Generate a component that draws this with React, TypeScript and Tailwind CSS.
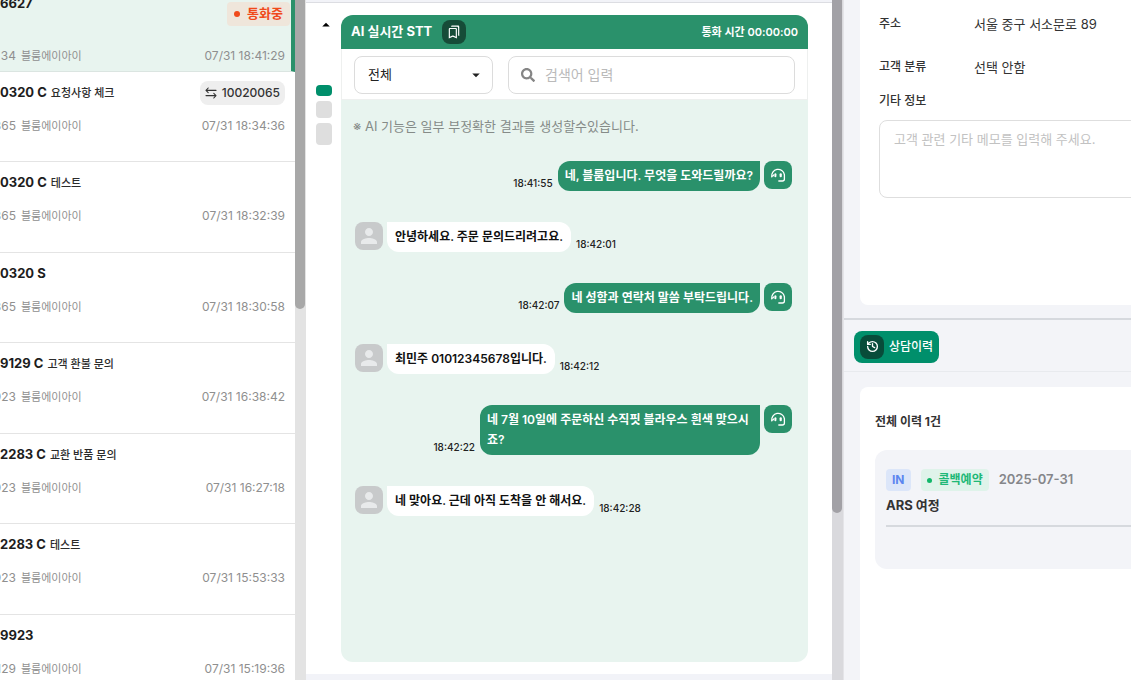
import { History } from "lucide-react";
import { FaSearch } from "react-icons/fa";
import { MdOutlineBookmarks, MdArrowDropDown, MdArrowDropUp, MdPerson } from "react-icons/md";

type Call = { title: string; subject?: string; ext: string; time: string; transfer?: string };
type Message = { from: "agent" | "customer"; text: string; time: string };

const calls: Call[] = [
  { title: "0320 C", subject: "요청사항 체크", ext: "365", time: "07/31 18:34:36", transfer: "10020065" },
  { title: "0320 C", subject: "테스트", ext: "365", time: "07/31 18:32:39" },
  { title: "0320 S", ext: "365", time: "07/31 18:30:58" },
  { title: "9129 C", subject: "고객 환불 문의", ext: "923", time: "07/31 16:38:42" },
  { title: "2283 C", subject: "교환 반품 문의", ext: "923", time: "07/31 16:27:18" },
  { title: "2283 C", subject: "테스트", ext: "923", time: "07/31 15:53:33" },
  { title: "9923", ext: "129", time: "07/31 15:19:36" },
];

const messages: Message[] = [
  { from: "agent", text: "네, 블룸입니다. 무엇을 도와드릴까요?", time: "18:41:55" },
  { from: "customer", text: "안녕하세요. 주문 문의드리려고요.", time: "18:42:01" },
  { from: "agent", text: "네 성함과 연락처 말씀 부탁드립니다.", time: "18:42:07" },
  { from: "customer", text: "최민주 01012345678입니다.", time: "18:42:12" },
  { from: "agent", text: "네 7월 10일에 주문하신 수직핏 블라우스 흰색 맞으시죠?", time: "18:42:22" },
  { from: "customer", text: "네 맞아요. 근데 아직 도착을 안 해서요.", time: "18:42:28" },
];

function SwapIcon() {
  return (
    <svg viewBox="0 0 12 12" className="h-3 w-3" fill="none" stroke="currentColor" strokeWidth="1.1" strokeLinecap="round" strokeLinejoin="round" aria-hidden="true">
      <path d="M3.2 1 1 3.4h10M3.2 5.6 1 3.4M8.8 6.4 11 8.6H1M8.8 11 11 8.6" />
    </svg>
  );
}

function HeadsetIcon() {
  return (
    <svg viewBox="0 0 16 16" className="size-4" fill="none" stroke="currentColor" strokeWidth="1.3" strokeLinecap="round" aria-hidden="true">
      <path d="M1.8 9.8A6.3 6.3 0 1 1 14.4 7.6V12q0 2-2 2H8.8" />
      <path d="M2 9.2Q3.2 9.2 3.6 8" />
      <rect x="4.4" y="6.2" width="2" height="4" rx="1" fill="currentColor" stroke="none" />
      <rect x="9.6" y="6.2" width="2.2" height="4" rx="1" fill="currentColor" stroke="none" />
    </svg>
  );
}

function Origin({ ext, time }: { ext: string; time: string }) {
  return (
    <div className="flex h-4 items-center text-xs text-[#8f8f8f]">
      <span className="flex w-4 shrink-0 justify-end">{ext}</span>
      <span className="ml-[5px] text-[11px]">블룸에이아이</span>
      <time className="mr-2.5 ml-auto">{time}</time>
    </div>
  );
}

function CallRow({ call }: { call: Call }) {
  return (
    <li className="h-[90px] border-b border-[#e4e4e4] pt-[9px] even:h-[91px]">
      <div className="mb-[13px] flex h-6 items-center">
        <strong className="text-[13px] font-bold text-[#1d1d1d]">{call.title}</strong>
        {call.subject && <span className="ml-1 text-[11px] font-medium text-[#2b2b2b]">{call.subject}</span>}
        {call.transfer && (
          <span className="mr-2.5 ml-auto flex h-6 items-center gap-[5px] rounded-lg bg-[#eeeeee] px-[5px] text-xs font-medium text-[#333]">
            <SwapIcon />
            {call.transfer}
          </span>
        )}
      </div>
      <Origin ext={call.ext} time={call.time} />
    </li>
  );
}

function CallList() {
  return (
    <aside className="flex min-w-0 overflow-hidden">
      <div className="min-w-0 flex-1">
        <div className="h-[72px] border-r-4 border-b border-r-[#2a916b] border-b-[#dbe5e1] bg-[#e8f4ef]">
          <div className="flex h-12 items-start">
            <strong className="-mt-1.5 text-[13px] font-bold text-[#1d1d1d]">6627</strong>
            <span className="mt-0.5 mr-px ml-auto flex h-6 items-center gap-[7px] rounded bg-[#efe6db] px-[7px] text-[13px] font-bold text-[#f04a1b]">
              <i className="size-1.5 rounded-full bg-[#f04a1b]" />
              통화중
            </span>
          </div>
          <div className="-mr-1"><Origin ext="34" time="07/31 18:41:29" /></div>
        </div>
        <ul>{calls.map((c) => <CallRow key={c.time} call={c} />)}</ul>
      </div>
      <div className="w-[11px] bg-[#e3e3e3]">
        <div className="h-[309px] w-2.5 rounded-b-full bg-[#a8a8a8]" />
      </div>
    </aside>
  );
}

function ChatMessage({ message }: { message: Message }) {
  const agent = message.from === "agent";
  return (
    <li className={agent ? "flex flex-row-reverse items-start" : "flex items-start"}>
      <span className={agent ? "flex size-7 shrink-0 items-center justify-center rounded-lg bg-[#2a916b] text-white" : "flex size-7 shrink-0 items-center justify-center rounded-lg bg-[#c8cacb] text-[#e8eaeb]"}>
        {agent ? <HeadsetIcon /> : <MdPerson size={24} />}
      </span>
      <p className={agent ? "mr-1 max-w-[280px] rounded-xl rounded-tr-none bg-[#2a916b] px-[7px] py-[5px] text-xs leading-5 font-semibold break-all text-white" : "ml-1 max-w-[280px] rounded-xl rounded-tl-none bg-white px-2 py-[5px] text-xs leading-5 font-semibold break-all text-[#111]"}>
        {message.text}
      </p>
      <time className={agent ? "mr-[5px] mb-0.5 self-end text-[10px] leading-3 font-medium text-[#222]" : "mb-0.5 ml-[5px] self-end text-[10px] leading-3 font-medium text-[#222]"}>{message.time}</time>
    </li>
  );
}

function Transcript() {
  return (
    <main className="flex min-w-0 bg-[#f2f3f8]">
      <div className="mt-0.5 mb-1.5 flex min-w-0 flex-1 border-t border-[#dcdde2] bg-white pt-3 pr-6 pb-3">
        <div className="flex w-[35px] shrink-0 flex-col items-center gap-[5px]">
          <button aria-label="접기" className="mb-[45px] flex h-5 items-center pl-1 text-black"><MdArrowDropUp size={18} /></button>
          <span className="h-[11px] w-4 rounded bg-[#008f6b]" />
          <span className="h-[17px] w-4 rounded bg-[#dedede]" />
          <span className="h-[22px] w-4 rounded bg-[#dedede]" />
        </div>
        <section className="flex min-w-0 flex-1 flex-col overflow-hidden rounded-xl bg-[#e8f4ef]">
          <header className="flex h-[34px] shrink-0 items-center bg-[#2a916b] px-2.5 text-white">
            <h1 className="text-[13px] font-bold">AI 실시간 STT</h1>
            <button aria-label="북마크" className="ml-2.5 flex size-6 items-center justify-center rounded-lg bg-[#164c38]"><MdOutlineBookmarks size={14} /></button>
            <span className="ml-auto text-[11px] font-semibold">통화 시간 00:00:00</span>
          </header>
          <div className="flex h-[51px] shrink-0 items-center gap-[15px] border-x border-b border-[#eef0ef] bg-white px-3 pt-0.5 text-[#222]">
            <label className="relative w-[139px] shrink-0">
              <span className="sr-only">화자</span>
              <select className="block h-[38px] w-full appearance-none rounded-lg border border-[#dcdcdc] bg-white px-[13px] text-[13px]"><option>전체</option></select>
              <MdArrowDropDown size={18} className="pointer-events-none absolute top-2.5 right-2" />
            </label>
            <label className="flex h-[38px] min-w-0 flex-1 items-center gap-2.5 rounded-lg border border-[#dcdcdc] px-3">
              <FaSearch size={14} className="shrink-0 text-[#858585]" />
              <input aria-label="검색어" placeholder="검색어 입력" className="min-w-0 flex-1 text-sm outline-none placeholder:text-[#bababa]" />
            </label>
          </div>
          <div className="px-3 pt-4">
            <p className="mb-[25px] text-[13px] leading-5 text-[#858b88]">※ AI 기능은 일부 부정확한 결과를 생성할수있습니다.</p>
            <ul className="flex flex-col gap-[31px] pr-1 pl-0.5">{messages.map((m) => <ChatMessage key={m.time} message={m} />)}</ul>
          </div>
        </section>
      </div>
      <div className="w-3 shrink-0 border-r border-[#e4e4e8] bg-[#d9d9dd]">
        <div className="h-[513px] w-[10px] rounded-b-full bg-[#a2a1a6]" />
      </div>
    </main>
  );
}

function CustomerPanel() {
  return (
    <aside className="min-w-0 overflow-hidden bg-[#f3f4f8] text-[#333]">
      <section className="ml-4 h-[305px] rounded-bl-lg bg-white pt-3 pl-[19px]">
        <dl className="grid grid-cols-[95px_1fr] gap-y-[19px] text-[13px] leading-6">
          <dt className="text-xs leading-6 font-medium">주소</dt><dd>서울 중구 서소문로 89</dd>
          <dt className="text-xs leading-6 font-medium">고객 분류</dt><dd>선택 안함</dd>
        </dl>
        <label htmlFor="memo" className="mt-3 mb-[9px] block text-xs leading-5 font-medium">기타 정보</label>
        <textarea id="memo" placeholder="고객 관련 기타 메모를 입력해 주세요." className="block h-[78px] w-[400px] resize-none rounded-lg border border-[#dedede] px-3.5 py-2 text-[13px] leading-5 outline-none placeholder:text-[#c2c2c2]" />
      </section>
      <div className="mt-[13px] flex h-[54px] items-center border-t-2 border-b border-t-[#d6d9de] border-b-[#e8eaee] pt-0.5 pl-2.5">
        <button className="flex h-8 items-center gap-[5px] rounded-lg bg-[#008f6b] px-1.5 text-xs font-medium text-white">
          <span className="flex size-6 items-center justify-center rounded-lg bg-[#084c3a]"><History size={13} strokeWidth={2.5} /></span>
          상담이력
        </button>
      </div>
      <section className="mt-[15px] ml-4 h-screen rounded-tl-lg bg-white pt-[25px] pl-[15px]">
        <h2 className="mb-[18px] text-xs leading-5 font-bold">전체 이력 1건</h2>
        <article className="h-[119px] rounded-l-xl bg-[#f3f4f8] pt-[19px] pl-[11px]">
          <div className="flex h-[22px] items-center gap-2.5 text-xs font-bold">
            <span className="flex h-[22px] items-center rounded bg-[#dce6f9] px-1.5 text-[#5c86f0]">IN</span>
            <span className="flex h-[22px] items-center gap-[7px] rounded bg-[#dff3ea] px-1.5 text-[#1fb877]"><i className="size-[5px] rounded-full bg-[#12b76a]" />콜백예약</span>
            <time className="text-[13px] font-semibold text-[#85868a]">2025-07-31</time>
          </div>
          <h3 className="border-b-2 border-[#d6d9de] pt-1 pb-2.5 text-[13px] leading-5 font-bold">ARS 여정</h3>
        </article>
      </section>
    </aside>
  );
}

export default function App() {
  return (
    <div className="grid h-screen grid-cols-[306fr_538fr_287fr] overflow-hidden bg-white font-['Inter','Noto_Sans_CJK_KR',sans-serif]">
      <CallList />
      <Transcript />
      <CustomerPanel />
    </div>
  );
}
